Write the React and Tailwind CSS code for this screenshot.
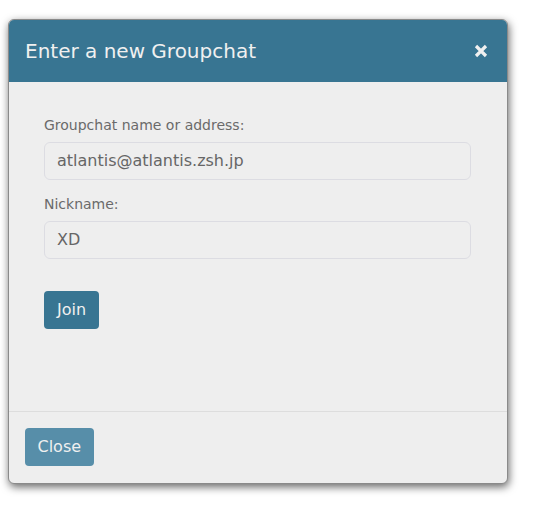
export default function App() {
  return (
    <div className="w-[541px] h-[505px] bg-white pt-[19px] pl-[8px]" style={{ fontFamily: '"DejaVu Sans", sans-serif' }}>
      <div className="w-[500px] h-[465px] flex flex-col rounded-[6px] border border-[#8a8a8a] bg-[#eeeeee] shadow-[1px_3px_8px_rgba(0,0,0,0.6)] overflow-hidden">
        <div className="h-[62px] shrink-0 bg-[#387592] flex items-center justify-between pl-[16px] pr-[19px]">
          <span className="text-[20px] text-[#f0f0f0]">Enter a new Groupchat</span>
          <svg width="14" height="14" viewBox="0 0 14 14">
            <path d="M2 2 L12 12 M12 2 L2 12" stroke="#f0f0f0" strokeWidth="3.2" strokeLinecap="butt" />
          </svg>
        </div>
        <div className="flex-1 pl-[35px] pr-[36px] pt-[33px]">
          <div className="text-[14px] leading-[20px] text-[#6a6a6a]">Groupchat name or address:</div>
          <div className="mt-[7px] h-[38px] rounded-[6px] border border-[#dcdce2] flex items-center px-[12px] text-[16px] text-[#666]">atlantis@atlantis.zsh.jp</div>
          <div className="mt-[14px] text-[14px] leading-[20px] text-[#6a6a6a]">Nickname:</div>
          <div className="mt-[7px] h-[38px] rounded-[6px] border border-[#dcdce2] flex items-center px-[12px] text-[16px] text-[#666]">XD</div>
          <button className="mt-[32px] h-[38px] px-[13px] rounded-[4px] bg-[#387592] text-[16px] text-[#f0f0f0]">Join</button>
        </div>
        <div className="h-[72px] shrink-0 border-t border-[#dddddd] pt-[16px] pl-[16px]">
          <button className="h-[38px] px-[12.5px] rounded-[4px] bg-[#578ea9] text-[16px] text-[#f0f0f0]">Close</button>
        </div>
      </div>
    </div>
  );
}
